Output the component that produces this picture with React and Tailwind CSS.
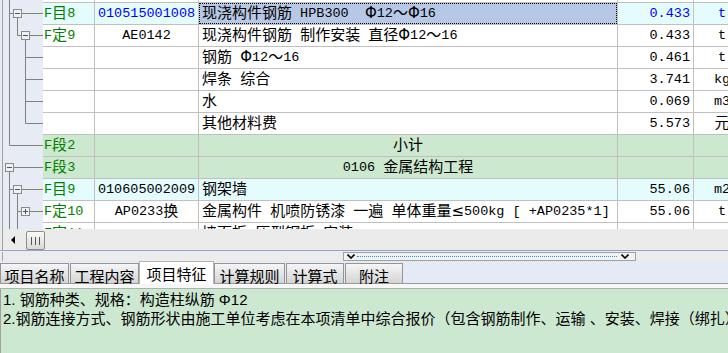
import React from 'react';

function Mixed({ t }) {
  if (!t) return null;
  return t
    .split(/([^\x00-\x7f]+)/)
    .filter(Boolean)
    .map((p, i) =>
      /[^\x00-\x7f]/.test(p) ? (
        <span key={i} className="font-['DejaVu_Sans','Noto_Sans_CJK_SC',sans-serif] text-[15px]">
          {p}
        </span>
      ) : (
        <span key={i} className="font-['Liberation_Mono',monospace] text-[13.5px]">
          {p}
        </span>
      )
    );
}

const rows = [
  { kind: 'white' },
  { kind: 'cyan', type: 'F目8', code: '010515001008', name: '现浇构件钢筋 HPB300  Φ12～Φ16', qty: '0.433', unit: 't', blue: true, selected: true },
  { kind: 'white', type: 'F定9', code: 'AE0142', name: '现浇构件钢筋 制作安装 直径Φ12～16', qty: '0.433', unit: 't' },
  { kind: 'white', name: '钢筋 Φ12～16', qty: '0.461', unit: 't' },
  { kind: 'white', name: '焊条 综合', qty: '3.741', unit: 'kg' },
  { kind: 'white', name: '水', qty: '0.069', unit: 'm3' },
  { kind: 'white', name: '其他材料费', qty: '5.573', unit: '元' },
  { kind: 'green', type: 'F段2', name: '小计', center: true },
  { kind: 'green', type: 'F段3', name: '0106 金属结构工程', center: true },
  { kind: 'cyan', type: 'F目9', code: '010605002009', name: '钢架墙', qty: '55.06', unit: 'm2' },
  { kind: 'white', type: 'F定10', code: 'AP0233换', name: '金属构件 机喷防锈漆 一遍 单体重量≤500kg [ +AP0235*1]', qty: '55.06', unit: 't' },
  { kind: 'white', type: 'F定11', name: '墙面板 压型钢板 安装' },
];

function Row({ r }) {
  const bg = r.kind === 'cyan' ? 'bg-[#e4fcfc]' : r.kind === 'green' ? 'bg-[#cce8cf]' : 'bg-white';
  const txt = r.blue ? 'text-[#0000ff]' : 'text-black';
  return (
    <div className={`flex h-[22px] shrink-0 border-b border-[#c0c0c0] whitespace-pre leading-none ${bg}`}>
      <div className="w-[52px] shrink-0 border-r border-[#c0c0c0] flex items-center pl-[1px] text-[#008000] overflow-hidden">
        <Mixed t={r.type} />
      </div>
      <div className={`w-[104px] shrink-0 border-r border-[#c0c0c0] flex items-center justify-center overflow-hidden ${txt}`}>
        <Mixed t={r.code} />
      </div>
      <div className="w-[419px] shrink-0 border-r border-[#c0c0c0] flex items-center overflow-hidden text-black">
        {r.selected ? (
          <div className="w-full h-full bg-[#b6c8e6] border border-dotted border-black flex items-center pl-[2px]">
            <Mixed t={r.name} />
          </div>
        ) : (
          <div className={`w-full h-full flex items-center ${r.center ? 'justify-center' : 'pl-[3px]'}`}>
            <Mixed t={r.name} />
          </div>
        )}
      </div>
      <div className={`w-[76px] shrink-0 border-r border-[#c0c0c0] flex items-center justify-end pr-[3px] ${txt}`}>
        <Mixed t={r.qty} />
      </div>
      <div className={`w-[56px] shrink-0 flex items-center justify-center ${txt}`}>
        <Mixed t={r.unit} />
      </div>
    </div>
  );
}

function Box({ cx, cy, plus }) {
  return (
    <g>
      <rect x={cx - 4 + 0.5} y={cy - 4 + 0.5} width="8" height="8" fill="#eef2f8" stroke="#8a8a8a" />
      <path d={`M${cx - 2} ${cy + 0.5} H${cx + 3}`} stroke="#555" />
      {plus && <path d={`M${cx + 0.5} ${cy - 2} V${cy + 3}`} stroke="#555" />}
    </g>
  );
}

function Tree() {
  return (
    <svg width="43" height="229" className="shrink-0 block">
      <rect x="0" y="0" width="43" height="229" fill="#e7ecf4" />
      <path d="M2.5 0 V229" stroke="#a0a0a0" />
      <g stroke="#808080" fill="none">
        <path d="M9.5 0 V145.5 H43" />
        <path d="M9 13.5 H13" />
        <path d="M22 13.5 H43" />
        <path d="M17.5 18 V35.5 H21" />
        <path d="M30 35.5 H43" />
        <path d="M25.5 40 V123.5 H43" />
        <path d="M25.5 57.5 H43" />
        <path d="M25.5 79.5 H43" />
        <path d="M25.5 101.5 H43" />
        <path d="M14 167.5 H43" />
        <path d="M9.5 172 V229" />
        <path d="M9 189.5 H13" />
        <path d="M22 189.5 H43" />
        <path d="M17.5 194 V229" />
        <path d="M17 211.5 H21" />
        <path d="M30 211.5 H43" />
      </g>
      <Box cx={17} cy={13} />
      <Box cx={25} cy={35} />
      <Box cx={9} cy={167} />
      <Box cx={17} cy={189} />
      <Box cx={25} cy={211} plus />
    </svg>
  );
}

const tabs = [
  { label: '项目名称', w: 'w-[69px]', ml: 'ml-0' },
  { label: '工程内容', w: 'w-[69px]', ml: 'ml-[1px]' },
  { label: '项目特征', w: 'w-[75px]', ml: 'ml-0', active: true },
  { label: '计算规则', w: 'w-[71px]', ml: 'ml-0' },
  { label: '计算式', w: 'w-[58px]', ml: 'ml-[1px]' },
  { label: '附注', w: 'w-[58px]', ml: 'ml-[1px]' },
];

export default function App() {
  return (
    <div className="w-[728px] h-[353px] overflow-hidden bg-[#f0f0f0] flex flex-col">
      {/* grid panel */}
      <div className="flex h-[229px] shrink-0 overflow-hidden">
        <Tree />
        <div className="flex flex-col -mt-[19px] overflow-hidden">
          {rows.map((r, i) => (
            <Row key={i} r={r} />
          ))}
        </div>
      </div>

      {/* horizontal scrollbar */}
      <div className="h-[22px] shrink-0 border-b border-[#8ea6c8] bg-[#ebebeb]">
        <div className="ml-[2px] h-[21px] border-l border-[#a0a0a0] flex items-start">
          <svg width="5" height="8" className="mt-[7px] ml-[7px] block">
            <path d="M5 0 L1 4 L5 8 Z" fill="#000" />
          </svg>
          <div className="ml-[11px] mt-[2px] w-[19px] h-[19px] rounded-[2px] border border-[#8c8c8c] bg-gradient-to-b from-[#fafafa] to-[#d9d9d9] flex items-center justify-center">
            <svg width="9" height="8" className="block">
              <path d="M0.5 0 V8 M4.5 0 V8 M8.5 0 V8" stroke="#555" />
            </svg>
          </div>
        </div>
      </div>

      {/* splitter */}
      <div className="h-[10px] shrink-0 bg-[#ececec]">
        <div className="ml-[2px] h-[10px] border-l border-[#a0a0a0]">
          <div className="ml-[340px] mt-[1px] w-[293px] h-[9px] border border-[#a0a0a0] bg-[#f2f2f2] flex items-center">
            <svg width="8" height="5" className="ml-[3px] block">
              <path d="M0.5 0.5 L4 4 L7.5 0.5" stroke="#000" strokeWidth="1.6" fill="none" />
            </svg>
            <div className="ml-[2px] w-[260px] border-t border-dotted border-[#2f8cf0]" />
            <svg width="8" height="5" className="ml-[4px] block">
              <path d="M0.5 0.5 L4 4 L7.5 0.5" stroke="#000" strokeWidth="1.6" fill="none" />
            </svg>
          </div>
        </div>
      </div>

      {/* tab strip */}
      <div className="h-[23px] shrink-0 bg-[#e4eaf6] border-b border-[#9a9a9a] flex items-end font-['Noto_Sans_CJK_SC',sans-serif] text-[15px] leading-none text-black">
        {tabs.map((t, i) =>
          t.active ? (
            <div
              key={i}
              className={`${t.w} ${t.ml} h-[23px] -mb-px relative bg-white border-l border-t border-r border-[#b4b4b4] flex items-center justify-center pt-[1px] shrink-0`}
            >
              {t.label}
            </div>
          ) : (
            <div
              key={i}
              className={`${t.w} ${t.ml} h-[20px] mb-0 bg-gradient-to-b from-[#f6f6f6] to-[#d4d4d4] border-l border-t border-r border-[#959595] flex items-center justify-center pt-[3px] shrink-0`}
            >
              {t.label}
            </div>
          )
        )}
      </div>

      {/* gap */}
      <div className="h-[4px] shrink-0 bg-[#f7f7f7] border-b border-[#b0b0b0] box-content" />

      {/* content */}
      <div className="flex-1 bg-[#cde8d0] border-l border-[#a0a0a0] pt-[1px] pl-[2px] font-['Liberation_Sans','Noto_Sans_CJK_SC',sans-serif] text-[15px] leading-[19px] text-black whitespace-nowrap overflow-hidden">
        <div>1. 钢筋种类、规格：构造柱纵筋 Φ12</div>
        <div>2.钢筋连接方式、钢筋形状由施工单位考虑在本项清单中综合报价（包含钢筋制作、运输 、安装、焊接（绑扎）</div>
      </div>
    </div>
  );
}
